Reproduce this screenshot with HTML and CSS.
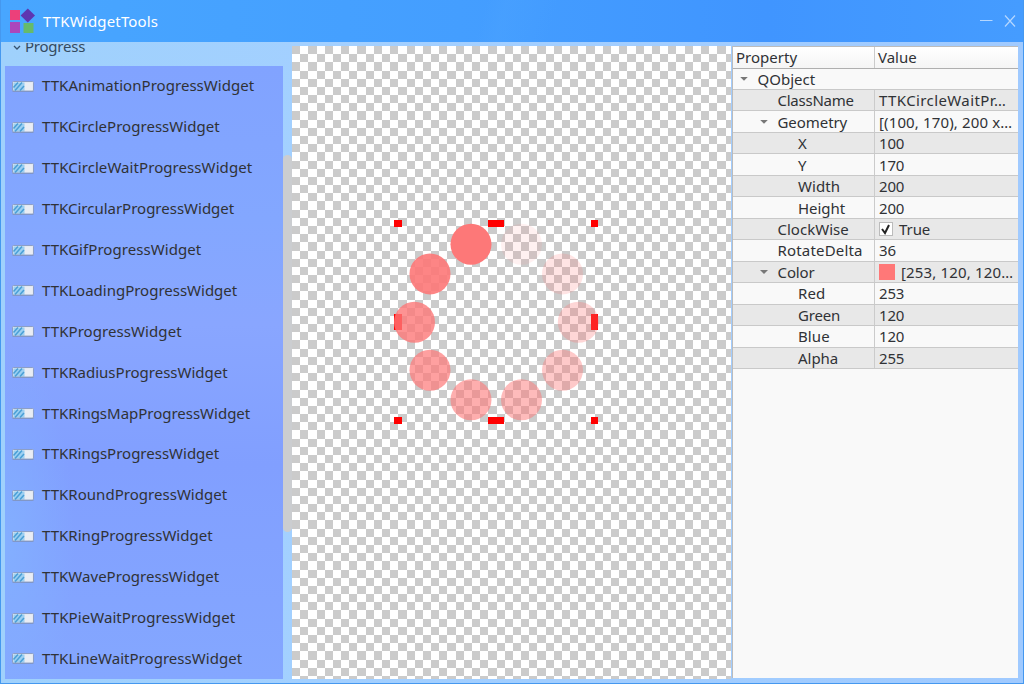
FILE: index.html
```html
<!DOCTYPE html>
<html lang="en">
<head>
<meta charset="utf-8">
<title>TTKWidgetTools</title>
<link rel="stylesheet" href="styles.css">
</head>
<body>
<div class="window">
  <header class="titlebar">
    <svg class="logo" width="26" height="26" viewBox="0 0 26 26"><path fill="#ec407a" d="M1 2h10v10H1z"/><path fill="#ab47bc" d="M1 14h10v11H1z"/><path fill="#66bb6a" d="M14.500 15h10v10h-10z"/><path fill="#5e35b1" d="M18.800 0.500 26 7.500 18.800 14.500 11.600 7.500z"/></svg>
    <h1 class="title"><span data-w="115">TTKWidgetTools</span></h1>
    <svg class="controls" width="40" height="16" viewBox="0 0 40 16" fill="none" stroke="#b5d7ff" stroke-width="1.200"><path d="M1 7.500h12.500M26 2.500l10 11M36 2.500l-10 11"/></svg>
  </header>
  <main class="content">
    <aside class="sidebar">
      <div class="group"><svg width="8" height="6" viewBox="0 0 8 6" fill="none" stroke="#36536f" stroke-width="1.300"><path d="M1 1l3 3 3-3"/></svg><span data-w="60">Progress</span></div>
      <div class="list-area">
        <ul class="list" id="list"></ul>
        <div class="track"><div class="thumb"></div></div>
      </div>
    </aside>
    <section class="canvas">
      <svg width="439" height="633" viewBox="292 46 439 633">
        <path fill="#fff" d="M292 46h439v633H292z"/>
        <path id="checks" fill="#cbcbcb" shape-rendering="crispEdges"/>
        <path fill="#f00" d="M394 220h8v7h-8zM488 220h16v7h-16zM591 220h7v7h-7zM394 314h8v16h-8zM591 314h7v16h-7zM394 417h8v7h-8zM488 417h16v7h-16zM591 417h7v7h-7z"/>
        <g fill="#fd7878">
          <circle cx="521.500" cy="244.300" r="20.500" opacity=".1"/>
          <circle cx="562.500" cy="273.900" r="20.500" opacity=".2"/>
          <circle cx="578.300" cy="322.200" r="20.500" opacity=".3"/>
          <circle cx="562.500" cy="370.200" r="20.500" opacity=".4"/>
          <circle cx="521.500" cy="399.800" r="20.500" opacity=".5"/>
          <circle cx="471" cy="399.800" r="20.500" opacity=".6"/>
          <circle cx="430" cy="370.200" r="20.500" opacity=".7"/>
          <circle cx="414.500" cy="322.200" r="20.500" opacity=".8"/>
          <circle cx="430" cy="273.900" r="20.500" opacity=".9"/>
          <circle cx="471" cy="244.300" r="20.500"/>
        </g>
      </svg>
    </section>
    <section class="props">
      <div class="head"><span class="name"><b data-w="61">Property</b></span><span class="value"><b data-w="38.500">Value</b></span></div>
      <div id="rows"></div>
    </section>
  </main>
</div>
<script src="app.js"></script>
</body>
</html>
```
FILE: styles.css
```css
* { box-sizing: border-box; }
body { margin: 0; overflow: hidden; font: 15px/21px "Noto Sans", sans-serif; color: #303236; }
.window { display: flex; flex-direction: column; width: 1024px; height: 684px; border: solid #4598ef; border-width: 0 1px 1px; background: linear-gradient(90deg, #48a6ff, #449eff 45%, #4095ff 75%, #459cff); }
.titlebar { display: flex; align-items: center; height: 42px; flex: none; padding: 0 4px 0 8px; background: linear-gradient(105deg, transparent 0 47%, #4fa6ff44 49%, transparent 54%); }
.title { flex: 1; margin: 0 0 0 8px; font-size: 15px; font-weight: 400; color: #fff; }
.logo { margin-top: -1px; }
.content { display: flex; height: 641px; padding: 4px 5px 5px 4px; background: linear-gradient(90deg, #9fd1fc, #a3d0ff 30%, #a0caff); }
.sidebar { display: flex; flex-direction: column; width: 287px; }
.group { display: flex; gap: 4px; height: 20px; padding-left: 8px; margin-top: -3px; margin-bottom: 3px; overflow: hidden; color: #344a60; }
.group svg { margin-top: 2px; }
.group span { line-height: 20px; margin-top: -7px; }
.list-area { display: flex; flex: 1; min-height: 0; }
.list { width: 278px; height: 613px; margin: 0; padding: 0; list-style: none; background: radial-gradient(ellipse 70px 200px at 0 78%, #83afff, transparent), linear-gradient(180deg, #81a3ff, #83a7ff 25%, #89a6ff 42%, #819fff 65%, #84a7ff); }
.list li { display: flex; align-items: center; gap: 8px; height: 40.900px; padding-left: 7px; }
.list li span { margin-top: -1px; }
.track { width: 9px; padding-top: 89px; }
.thumb { height: 377px; border-radius: 5px; background: #cbcdd0; }
.canvas { width: 439px; }
.canvas svg { display: block; }
.props { width: 286px; height: 632px; margin-left: 1px; border: 1px solid #bcbcbc; border-width: 1px 0 0 1px; background: #f9f9f9; }
.head, .row { display: flex; border-bottom: 1px solid #c9c9c9; }
.head { height: 21.500px; border-color: #afafaf; background: linear-gradient(#fff, #f5f5f5); }
.head b { font-weight: 400; }
.head span, .row > div { display: flex; align-items: center; white-space: nowrap; }
.name { width: 142px; border-right: 1px solid #cbcbcb; }
.head .name, .head .value { padding-left: 3px; }
.row { height: 21.480px; }
.row span { position: relative; top: 0.500px; }
.row:nth-child(even) { background: #e8e8e8; }
.row .value { padding-left: 4px; }
.row.root .name { border: 0; }
.d0 { padding-left: 7px; }
.d1 { padding-left: 44.500px; }
.d1.open { padding-left: 27px; }
.d2 { padding-left: 65px; }
.tri { width: 8px; height: 4px; margin-right: 9.500px; background: #777; clip-path: polygon(0 0, 100% 0, 50% 100%); }
.check { width: 14px; height: 14px; margin-right: 6px; border: 1px solid #bbb; background: #fff; }
.check svg { display: block; }
.swatch { width: 16px; height: 16px; margin-right: 6px; background: #ff7878; }
```
FILE: app.js
```js
const names = [['Animation', 212], ['Circle', 177.5], ['CircleWait', 210], ['Circular', 192], ['Gif', 159], ['Loading', 195], ['', 139.5], ['Radius', 185.5], ['RingsMap', 208], ['Rings', 177], ['Round', 185], ['Ring', 170.5], ['Wave', 177], ['PieWait', 193], ['LineWait', 200]];
const icon = '<svg width="22" height="11" viewBox="0 0 22 11"><rect x=".5" y=".5" width="21" height="9.5" rx="1" fill="#dfe5ee" stroke="#8d9fc6"/><path fill="#e9edf4" d="M12.500 1.500h8v8h-8z"/><path fill="#9dd0f2" d="M1.500 1.500h11v8h-11z"/><path d="M1.500 6.500l4.500-5M3 9.500l7-8M8 9.500l4-4.500" stroke="#4a9fd6" stroke-width="1.500"/><path d="M.5 10.300h21" stroke="#7d8fb8" stroke-width=".8"/></svg>';
document.getElementById('list').innerHTML = names.map(([n, w]) => `<li>${icon}<span data-w="${w}">TTK${n}ProgressWidget</span></li>`).join('');

const check = '<div class="check"><svg width="12" height="12" viewBox="0 0 12 12" fill="none" stroke="#222" stroke-width="2"><path d="M2 6l3 4 4-8"/></svg></div>';
const props = [
  [0, 'QObject', 57.5, '', 0, '', 1],
  [1, 'ClassName', 76, 'TTKCircleWaitPr…', 127],
  [1, 'Geometry', 69.5, '[(100, 170), 200 x…', 133, '', 1],
  [2, 'X', 9, '100', 25],
  [2, 'Y', 9, '170', 25],
  [2, 'Width', 42, '200', 25],
  [2, 'Height', 47, '200', 25],
  [1, 'ClockWise', 71, 'True', 31, check],
  [1, 'RotateDelta', 85, '36', 17],
  [1, 'Color', 37, '[253, 120, 120…', 112, '<div class="swatch"></div>', 1],
  [2, 'Red', 27, '253', 25],
  [2, 'Green', 42, '120', 25],
  [2, 'Blue', 31.5, '120', 25],
  [2, 'Alpha', 40, '255', 25]
];
document.getElementById('rows').innerHTML = props.map(([d, n, w, v, vw, extra = '', open]) =>
  `<div class="row${d ? '' : ' root'}"><div class="name d${d}${open ? ' open' : ''}">${open ? '<i class="tri"></i>' : ''}<span data-w="${w}">${n}</span></div><div class="value">${extra}${v ? `<span data-w="${vw}">${v}</span>` : ''}</div></div>`).join('');

document.querySelectorAll('[data-w]').forEach(el => {
  const r = document.createRange();
  r.selectNodeContents(el);
  const diff = +el.dataset.w + 0.2 - r.getBoundingClientRect().width;
  if (el.textContent.length > 1) el.style.letterSpacing = diff / el.textContent.length + 'px';
});

// Checkerboard cells with edges rounded to whole pixels.
const cell = 8.18;
let d = '';
for (let j = 0; j < 78; j++) {
  for (let i = j % 2; i < 54; i += 2) {
    const x = Math.round(292 + i * cell), y = Math.round(46 + j * cell);
    const x2 = Math.round(292 + (i + 1) * cell), y2 = Math.round(46 + (j + 1) * cell);
    d += `M${x} ${y}H${x2}V${y2}H${x}z`;
  }
}
document.getElementById('checks').setAttribute('d', d);
```
